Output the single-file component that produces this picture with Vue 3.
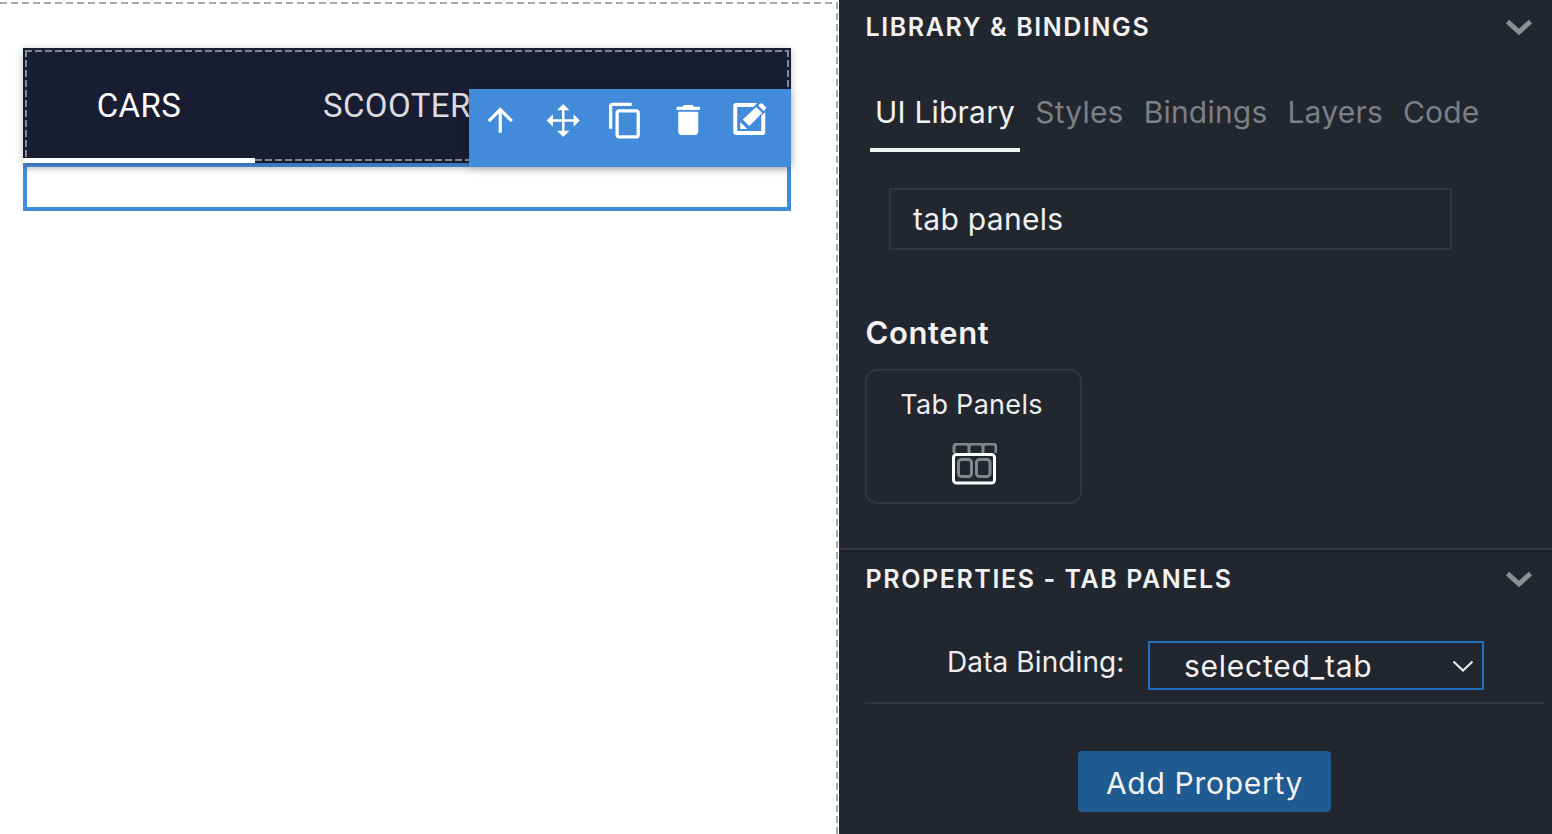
<script setup>
const tabs = ['UI Library', 'Styles', 'Bindings', 'Layers', 'Code']
</script>

<template>
  <div class="page">
    <div class="canvas">
      <div class="widget">
        <div class="tab-bar">
          <div class="tab active">CARS</div>
          <div class="tab">SCOOTERS</div>
        </div>
        <div class="tab-panels"></div>
        <div class="toolbar">
          <svg class="tool" viewBox="0 0 24 24" width="38" height="38"><path d="M4 12l1.41 1.41L11 7.83V20h2V7.83l5.58 5.59L20 12l-8-8-8 8z" /></svg>
          <svg class="tool" viewBox="0 0 32 32" width="33" height="33"><path d="M16 0l6 6h-4.800v8.800H26V10l6 6-6 6v-4.800h-8.800V26H22l-6 6-6-6h4.800v-8.800H6V22l-6-6 6-6v4.800h8.800V6H10z" /></svg>
          <svg class="tool" viewBox="0 0 24 24" width="39" height="39"><path d="M16 1H4c-1.100 0-2 .9-2 2v14h2V3h12V1zm3 4H8c-1.100 0-2 .9-2 2v14c0 1.100.9 2 2 2h11c1.100 0 2-.9 2-2V7c0-1.100-.9-2-2-2zm0 16H8V7h11v14z" /></svg>
          <svg class="tool" viewBox="0 0 24 24" width="40" height="40"><path d="M6 19c0 1.100.9 2 2 2h8c1.100 0 2-.9 2-2V7H6v12zM19 4h-3.500l-1-1h-5l-1 1H5v2h14V4z" /></svg>
          <svg class="tool" viewBox="0 0 34 34" width="34" height="34"><path d="M3 0h21l-4 4H4v24h24V13l4-4v20a3 3 0 0 1-3 3H3a3 3 0 0 1-3-3V3a3 3 0 0 1 3-3z" /><path d="M7 26v-7l7 7zM9.500 16.500L23 4l6 6-13 13zM25 2.500L26.500 1a2 2 0 0 1 3 0L32 3.500a2 2 0 0 1 0 3L30.500 8z" /></svg>
        </div>
      </div>
    </div>

    <div class="panel">
      <section class="section library">
        <header class="section-head">
          <span>LIBRARY &amp; BINDINGS</span>
          <svg viewBox="0 0 28 16" width="28" height="16"><path d="M2.500 2.500L14 13 25.500 2.500" /></svg>
        </header>
        <nav class="lib-tabs">
          <div v-for="(t, i) in tabs" :key="t" class="lib-tab" :class="{ on: i === 0 }">{{ t }}</div>
        </nav>
        <div class="search">tab panels</div>
        <h3 class="content-title">Content</h3>
        <div class="card">
          <div class="card-label">Tab Panels</div>
          <svg class="card-icon" viewBox="0 0 45 42" width="45" height="42">
            <path class="grey" d="M2 10V4a3 3 0 0 1 3-3h9a3 3 0 0 1 3 3v6M17 4a3 3 0 0 1 3-3h8a3 3 0 0 1 3 3v6M31 4a3 3 0 0 1 3-3h7a3 3 0 0 1 3 3v6" />
            <rect class="grey" x="6.500" y="16.500" width="13" height="17" rx="3" />
            <rect class="grey" x="24.500" y="16.500" width="13.500" height="17" rx="3" />
            <rect class="white" x="1.500" y="11.500" width="41" height="28.500" rx="3" />
          </svg>
        </div>
      </section>

      <section class="section props">
        <header class="section-head">
          <span>PROPERTIES - TAB PANELS</span>
          <svg viewBox="0 0 28 16" width="28" height="16"><path d="M2.500 2.500L14 13 25.500 2.500" /></svg>
        </header>
        <div class="prop-row">
          <label class="prop-label">Data Binding:</label>
          <div class="select">
            <span>selected_tab</span>
            <svg viewBox="0 0 22 12" width="22" height="12"><path d="M1.500 1.500L11 10.500 20.500 1.500" /></svg>
          </div>
        </div>
        <div class="add-wrap">
          <button class="add">Add Property</button>
        </div>
      </section>
    </div>
  </div>
</template>

<style>
html, body {
  margin: 0;
  background: #fff;
  overflow: hidden;
}
</style>

<style scoped>
.page {
  display: flex;
  width: 1552px;
  height: 834px;
  overflow: hidden;
  font-family: Roboto, "Liberation Sans", sans-serif;
}

.canvas {
  box-sizing: border-box;
  width: 838px;
  height: 832px;
  margin: 2px 1px 0 0;
  padding: 46px 0 0 23px;
  flex: none;
  background:
    repeating-linear-gradient(90deg, #a8a8a8 0 7px, transparent 7px 11px) top left / 100% 2px no-repeat,
    repeating-linear-gradient(180deg, #a8a8a8 0 7px, transparent 7px 11px) top right / 2px 100% no-repeat;
}

.widget {
  position: relative;
  width: 768px;
}

.tab-bar {
  display: flex;
  box-sizing: border-box;
  height: 115px;
  background: #191d32;
  position: relative;
  box-shadow: 0 2px 8px rgba(0, 0, 0, 0.25);
}

.tab-bar::after {
  content: "";
  position: absolute;
  inset: 2px;
  background:
    repeating-linear-gradient(90deg, #85868f 0 7px, transparent 7px 10px) top left / 100% 2px no-repeat,
    repeating-linear-gradient(90deg, #85868f 0 7px, transparent 7px 10px) bottom left / 100% 2px no-repeat,
    repeating-linear-gradient(180deg, #85868f 0 7px, transparent 7px 10px) top left / 2px 100% no-repeat,
    repeating-linear-gradient(180deg, #85868f 0 7px, transparent 7px 10px) top right / 2px 100% no-repeat;
  pointer-events: none;
}

.tab {
  min-width: 232px;
  height: 115px;
  padding: 0 68px;
  line-height: 115px;
  box-sizing: border-box;
  text-align: center;
  font-size: 33px;
  letter-spacing: 0.4px;
  color: #dcdce0;
  position: relative;
  white-space: nowrap;
}

.tab.active {
  color: #fff;
}

.tab.active::after {
  content: "";
  position: absolute;
  left: 0;
  right: 0;
  bottom: 0;
  height: 5px;
  background: #fff;
  z-index: 1;
}

.tab-panels {
  box-sizing: border-box;
  height: 48px;
  background: #fff;
  border: 4px solid #428bdb;
  box-shadow: inset 0 5px 6px -3px rgba(0, 0, 0, 0.15);
}

.toolbar {
  position: absolute;
  top: 41px;
  right: 0;
  box-sizing: border-box;
  width: 322px;
  height: 78px;
  padding: 12px 9.500px 28px 0;
  display: flex;
  align-items: center;
  background: #428bdb;
  box-shadow: 0 3px 8px rgba(0, 0, 0, 0.15);
}

.tool {
  flex: 1;
  fill: #fff;
}

.panel {
  flex: 1;
  background: #22262f;
  color: #fff;
  display: flex;
  flex-direction: column;
}

.section {
  box-sizing: border-box;
  padding: 0 7px 0 26px;
}

.library {
  height: 552px;
  border-bottom: 2px solid #1c1f26;
  box-shadow: inset 0 -2px 0 #35383e;
}

.section-head {
  display: flex;
  align-items: center;
  justify-content: space-between;
  height: 54px;
  font-family: Inter, sans-serif;
  font-size: 25px;
  font-weight: 600;
  letter-spacing: 1.6px;
  color: #f2f2f2;
  padding: 0 12px 0 0.500px;
}

.section-head svg {
  fill: none;
  stroke: #8d8f93;
  stroke-width: 5;
}

.lib-tabs {
  display: flex;
  gap: 10px;
  margin: 22px 0 0 5px;
}

.lib-tab {
  padding: 0 5px;
  height: 76px;
  box-sizing: border-box;
  line-height: 72px;
  font-family: Inter, sans-serif;
  font-size: 30px;
  letter-spacing: 0.2px;
  color: #7d7f85;
}

.lib-tab.on {
  color: #f2f2f2;
  border-bottom: 4px solid #f2f2f2;
}

.search {
  box-sizing: border-box;
  width: 563px;
  height: 62px;
  margin: 36px 0 0 24px;
  padding-left: 22px;
  border: 2px solid #33353a;
  line-height: 58px;
  font-family: Inter, sans-serif;
  font-size: 30px;
  letter-spacing: 0.3px;
  color: #f0f0f0;
}

.content-title {
  margin: 63px 0 0 0.500px;
  font-family: Inter, sans-serif;
  font-size: 31px;
  font-weight: 600;
  letter-spacing: 0.6px;
  line-height: 40px;
  color: #f2f2f2;
}

.card {
  box-sizing: border-box;
  width: 217px;
  height: 135px;
  margin-top: 16px;
  border: 2px solid #33353a;
  border-radius: 12px;
  display: flex;
  flex-direction: column;
  align-items: center;
}

.card-label {
  margin: 16px 0 0 -4px;
  font-family: Inter, sans-serif;
  font-size: 27px;
  letter-spacing: 0.3px;
  line-height: 36px;
  color: #eee;
}

.card-icon {
  margin: 20px 0 0 2px;
  fill: none;
}

.card-icon .grey {
  stroke: #85868a;
  stroke-width: 3;
}

.card-icon .white {
  stroke: #fff;
  stroke-width: 3;
}

.prop-row {
  display: flex;
  align-items: center;
  box-sizing: border-box;
  height: 86px;
  margin-top: 12px;
  padding: 11px 0 0 82px;
  border-bottom: 2px solid #33353a;
}

.prop-label {
  width: 177px;
  font-family: Inter, sans-serif;
  font-size: 28px;
  letter-spacing: 0.1px;
  color: #eee;
  white-space: nowrap;
  margin-top: -7px;
}

.select {
  box-sizing: border-box;
  width: 336px;
  height: 49px;
  margin: 0 0 0 24px;
  padding: 0 8px 0 34px;
  border: 2px solid #1f6fc0;
  display: flex;
  align-items: center;
  justify-content: space-between;
  font-family: Inter, sans-serif;
  font-size: 30px;
  letter-spacing: 0.75px;
  color: #f2f2f2;
}

.select svg {
  fill: none;
  stroke: #eee;
  stroke-width: 2;
}

.add-wrap {
  display: flex;
  margin: 47px 0 0 213px;
}

.add {
  width: 253px;
  height: 61px;
  border: none;
  border-radius: 4px;
  background: #1f5a91;
  color: #f2f2f2;
  font-family: Inter, sans-serif;
  font-size: 30px;
  letter-spacing: 0.7px;
  padding: 2px 0 0;
}
</style>
